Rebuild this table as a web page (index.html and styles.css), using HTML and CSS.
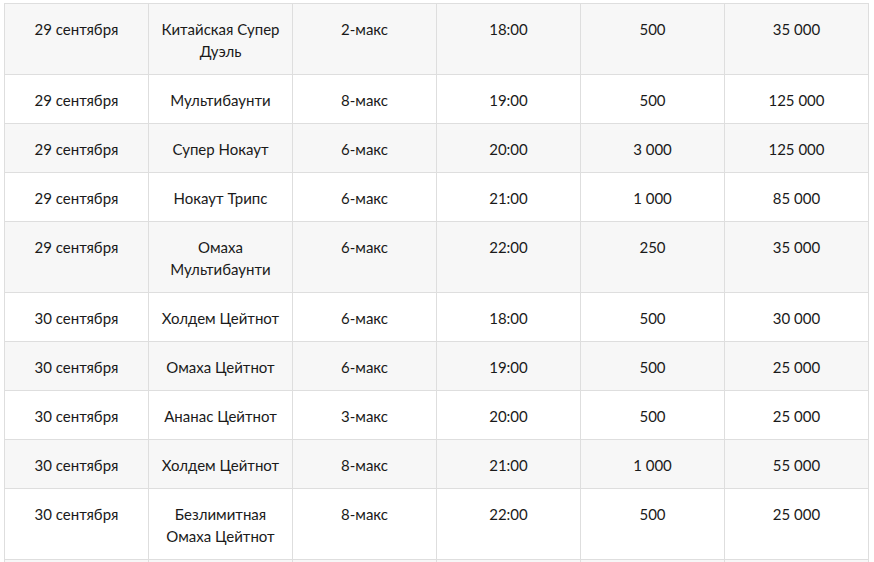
FILE: index.html
```html
<!DOCTYPE html>
<html lang="ru">
<head>
<meta charset="utf-8">
<link rel="stylesheet" href="styles.css">
</head>
<body>
<table class="sched">
<colgroup><col><col><col><col><col><col></colgroup>
<tbody>
<tr><td>29 сентября</td><td>Китайская Супер<br>Дуэль</td><td>2-макс</td><td>18:00</td><td>500</td><td>35 000</td></tr>
<tr><td>29 сентября</td><td>Мультибаунти</td><td>8-макс</td><td>19:00</td><td>500</td><td>125 000</td></tr>
<tr><td>29 сентября</td><td>Супер Нокаут</td><td>6-макс</td><td>20:00</td><td>3 000</td><td>125 000</td></tr>
<tr><td>29 сентября</td><td>Нокаут Трипс</td><td>6-макс</td><td>21:00</td><td>1 000</td><td>85 000</td></tr>
<tr><td>29 сентября</td><td>Омаха<br>Мультибаунти</td><td>6-макс</td><td>22:00</td><td>250</td><td>35 000</td></tr>
<tr><td>30 сентября</td><td>Холдем Цейтнот</td><td>6-макс</td><td>18:00</td><td>500</td><td>30 000</td></tr>
<tr><td>30 сентября</td><td>Омаха Цейтнот</td><td>6-макс</td><td>19:00</td><td>500</td><td>25 000</td></tr>
<tr><td>30 сентября</td><td>Ананас Цейтнот</td><td>3-макс</td><td>20:00</td><td>500</td><td>25 000</td></tr>
<tr><td>30 сентября</td><td>Холдем Цейтнот</td><td>8-макс</td><td>21:00</td><td>1 000</td><td>55 000</td></tr>
<tr><td>30 сентября</td><td>Безлимитная<br>Омаха Цейтнот</td><td>8-макс</td><td>22:00</td><td>500</td><td>25 000</td></tr>
<tr class="tail"><td></td><td></td><td></td><td></td><td></td><td></td></tr>
</tbody>
</table>
</body>
</html>
```
FILE: styles.css
```css
html, body {
  margin: 0;
  padding: 0;
  background: #ffffff;
  overflow: hidden;
  height: 562px;
}
.sched {
  margin: 3px 0 0 4px;
  border-collapse: collapse;
  table-layout: fixed;
  width: 865px;
  font-family: Lato, "Noto Sans", sans-serif;
  font-size: 15px;
  line-height: 22px;
  color: #1a1a1a;
}
.sched col {
  width: 144px;
}
.sched td {
  border: 1px solid #dedede;
  padding: 14px 8px 12px;
  text-align: center;
  vertical-align: top;
}
.sched tr:nth-child(odd) td {
  background: #f7f7f7;
}
.sched tr:nth-child(even) td {
  background: #ffffff;
}
.sched tr.tail td {
  height: 22px;
}
```
